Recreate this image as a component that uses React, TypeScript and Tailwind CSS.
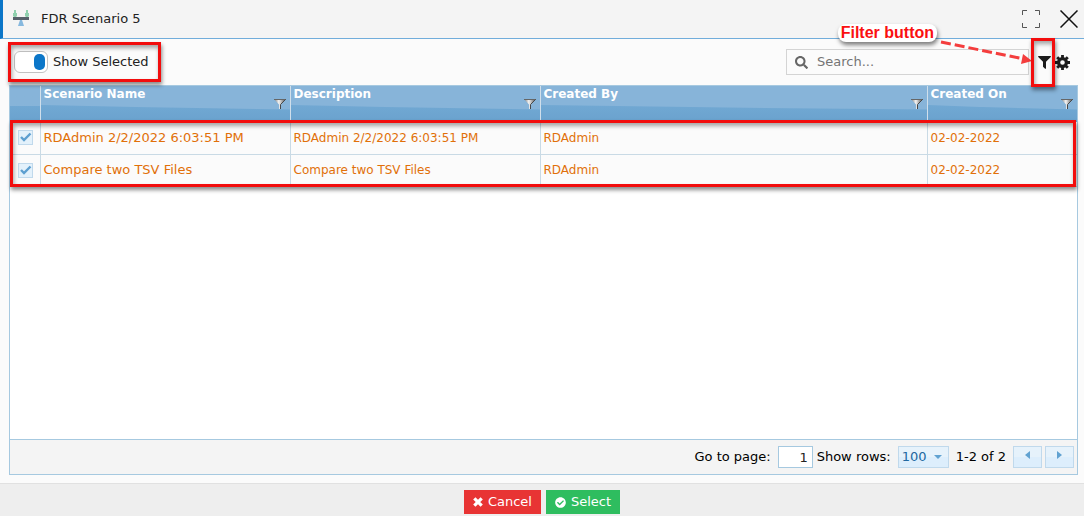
import { useState } from "react";
import { FaCheckCircle, FaSearch } from "react-icons/fa";

type Scenario = { name: string; description: string; createdBy: string; createdOn: string };

const scenarios: Scenario[] = [
  {
    name: "RDAdmin 2/2/2022 6:03:51 PM",
    description: "RDAdmin 2/2/2022 6:03:51 PM",
    createdBy: "RDAdmin",
    createdOn: "02-02-2022",
  },
  {
    name: "Compare two TSV Files",
    description: "Compare two TSV Files",
    createdBy: "RDAdmin",
    createdOn: "02-02-2022",
  },
];

const columns = ["Scenario Name", "Description", "Created By", "Created On"];

const highlight =
  "pointer-events-none absolute z-10 border-3 border-[#f20d0d] shadow-[1px_3px_4px_rgba(0,0,0,0.45),inset_1px_3px_4px_rgba(0,0,0,0.35)]";

function ScaleIcon() {
  return (
    <svg width="18" height="18" viewBox="0 0 18 18" aria-hidden="true">
      <path d="M2 0h2v3h1v3L3 8 1 6V3h1zM14 0h2v3h1v3l-2 2-2-2V3h1z" fill="#8fd0ae" />
      <path d="M1 7h16v3H1z" fill="#56616a" />
      <path d="M8 10h2l2 6H6z" fill="#86b8de" />
    </svg>
  );
}

function ExpandIcon() {
  return (
    <svg width="18" height="18" viewBox="0 0 18 18" fill="none" stroke="#555" aria-hidden="true">
      <path d="M.5 5V.5H5M13 .5h4.500V5M17.500 13v4.500H13M5 17.500H.5V13" />
    </svg>
  );
}

function CloseIcon() {
  return (
    <svg width="18" height="18" viewBox="0 0 18 18" stroke="#111" strokeWidth="1.500" aria-hidden="true">
      <path d="M.5.5l17 17M17.500.5l-17 17" />
    </svg>
  );
}

function FilterIcon() {
  return (
    <svg width="13" height="13" viewBox="0 0 13 13" fill="#1c1c1c" aria-hidden="true">
      <path d="M.6 0h11.800q.9.200.4 1L8 5.800v6.600q-.3.600-.9.300L5 10.700V5.800L.2 1Q-.2.200.6 0z" />
    </svg>
  );
}

function GearIcon() {
  return (
    <svg width="15" height="15" viewBox="0 0 15 15" fill="none" stroke="#1c1c1c" aria-hidden="true">
      <circle cx="7.500" cy="7.500" r="3.900" strokeWidth="3.200" />
      <path
        d="M7.500 0v3M7.500 12v3M0 7.500h3M12 7.500h3M2.200 2.200l2.100 2.100M10.700 10.700l2.100 2.100M2.200 12.800l2.100-2.100M10.700 4.300l2.100-2.100"
        strokeWidth="2.800"
      />
    </svg>
  );
}

function CrossIcon() {
  return (
    <svg width="10" height="10" viewBox="0 0 10 10" stroke="#fff" strokeWidth="3.200" aria-hidden="true">
      <path d="M1.300 1.300l7.400 7.400M8.700 1.300L1.300 8.700" />
    </svg>
  );
}

function FunnelIcon() {
  return (
    <svg width="12" height="12" viewBox="0 0 12 12" aria-hidden="true">
      <defs>
        <linearGradient id="funnel">
          <stop offset="0" stopColor="#777" />
          <stop offset=".4" stopColor="#f5f5f5" />
          <stop offset="1" stopColor="#444" />
        </linearGradient>
      </defs>
      <path d="M0 1h12L7 6.500V11H5V6.500z" fill="url(#funnel)" />
      <path d="M0 1.500h12" stroke="#666" />
      <path d="M11.500 1.500l-5 5V11" fill="none" stroke="#484848" />
    </svg>
  );
}

function HeaderShade() {
  return (
    <svg
      className="pointer-events-none absolute inset-0 size-full"
      viewBox="0 0 100 36"
      preserveAspectRatio="none"
      aria-hidden="true"
    >
      <path d="M0 0H100V23.500Q50 22 0 19z" fill="#87b4d9" />
    </svg>
  );
}

function RowCheckbox({ label }: { label: string }) {
  return (
    <span className="relative block size-[15px]">
      <input
        type="checkbox"
        defaultChecked
        aria-label={label}
        className="peer block size-[15px] appearance-none border border-[#c0d9ec] bg-[#e3f1fb]"
      />
      <svg
        className="pointer-events-none absolute inset-0 hidden peer-checked:block"
        width="15"
        height="15"
        viewBox="0 0 15 15"
        fill="none"
        stroke="#5d9fd0"
        strokeWidth="2.400"
        aria-hidden="true"
      >
        <path d="M3 7l3 3 6.500-6.500" />
      </svg>
    </span>
  );
}

function Arrow({ left }: { left?: boolean }) {
  return (
    <svg width="5" height="8" viewBox="0 0 5 8" fill="#61a2d1" aria-hidden="true">
      <path d={left ? "M5 0v8L0 4z" : "M0 0v8l5-4z"} />
    </svg>
  );
}

export default function App() {
  const [showSelected, setShowSelected] = useState(true);

  return (
    <div className="flex min-h-screen flex-col bg-[#fbfbfb] font-['DejaVu_Sans',sans-serif] text-[13px] leading-4 text-[#222]">
      <header className="flex h-[39px] items-center border-b border-l-3 border-b-[#71addb] border-l-[#0b76c8] bg-[#f4f4f4] pr-1.5 pl-[9px]">
        <ScaleIcon />
        <h1 className="ml-[11px] flex-1">FDR Scenario 5</h1>
        <button type="button" aria-label="Maximize" className="mr-5">
          <ExpandIcon />
        </button>
        <button type="button" aria-label="Close">
          <CloseIcon />
        </button>
      </header>

      <main className="flex flex-1 flex-col pr-1.5 pb-2 pl-[9px]">
        <div className="flex h-[46px] items-center justify-between">
          <div className="relative pl-[5px]">
            <label className="flex items-center gap-[5px]">
              <input
                type="checkbox"
                checked={showSelected}
                onChange={(e) => setShowSelected(e.target.checked)}
                className="flex h-[22px] w-[34px] appearance-none items-center rounded-md border border-[#c2c2c2] bg-white px-0.5 before:h-4 before:w-[11px] before:rounded-[5px] before:bg-[#999] checked:justify-end checked:before:bg-[#0b76c8]"
              />
              <span>Show Selected</span>
            </label>
            <div className={`${highlight} -inset-y-[9px] -right-3 -left-px`} />
          </div>

          <div className="relative flex items-center">
            <label className="flex h-[26px] w-[243px] items-center border border-[#d4d4d4] px-2">
              <FaSearch className="size-[13px] text-[#666]" aria-hidden="true" />
              <input
                type="search"
                aria-label="Search"
                placeholder="Search..."
                className="ml-[9px] min-w-0 flex-1 bg-transparent outline-none placeholder:text-[#757575]"
              />
            </label>
            <div className="relative ml-[9px]">
              <button type="button" aria-label="Filter" className="block">
                <FilterIcon />
              </button>
              <div className={`${highlight} -inset-y-[18px] -right-1 -left-[7px]`} />
            </div>
            <button type="button" aria-label="Settings" className="mr-2 ml-1">
              <GearIcon />
            </button>
            <svg
              className="pointer-events-none absolute right-[46px] bottom-[9px]"
              width="92"
              height="28"
              viewBox="0 0 92 28"
              aria-hidden="true"
            >
              <path d="M1 4l83 17" stroke="#f43d3d" strokeWidth="3" strokeDasharray="10 4" />
              <path d="M92 23l-11 3 2-10z" fill="#f43d3d" />
            </svg>
            <span className="pointer-events-none absolute right-[141px] bottom-[33px] rounded-lg bg-white px-[3px] font-['Liberation_Sans',sans-serif] text-base leading-[18px] font-bold whitespace-nowrap text-[#fa1010] shadow-[1px_3px_4px_rgba(0,0,0,0.5)]">
              Filter button
            </span>
          </div>
        </div>

        <section className="flex flex-1 flex-col border border-[#a6c9e0] bg-white">
          <div className="relative">
            <table className="w-full table-fixed border-collapse text-xs">
              <colgroup>
                <col className="w-[30px]" />
                <col className="w-[250px]" />
                <col className="w-[250px]" />
                <col />
                <col className="w-[150px]" />
              </colgroup>
              <thead>
                <tr className="h-9 bg-linear-to-b from-[#79afd8] to-[#6aa2ce] text-left align-top text-white">
                  <th className="border-r border-[#d0dfeb] bg-linear-to-b from-[#87b4d9] from-55% to-transparent to-55%" />
                  {columns.map((column) => (
                    <th key={column} scope="col" className="relative border-r border-[#d0dfeb] px-[3px] last:border-r-0">
                      <HeaderShade />
                      <span className="relative">{column}</span>
                      <button
                        type="button"
                        aria-label={`Filter ${column}`}
                        className="absolute right-1 bottom-3"
                      >
                        <FunnelIcon />
                      </button>
                    </th>
                  ))}
                </tr>
              </thead>
              <tbody>
                {scenarios.map((scenario) => (
                  <tr key={scenario.name} className="h-8 border-b border-[#c9dae5] bg-[#fbfbfb] text-[#e17009]">
                    <td className="border-r border-[#c9dae5] pl-2">
                      <RowCheckbox label={`Select ${scenario.name}`} />
                    </td>
                    <td className="border-r border-[#c9dae5] px-[3px] text-[13px] leading-4">{scenario.name}</td>
                    <td className="border-r border-[#c9dae5] px-[3px]">{scenario.description}</td>
                    <td className="border-r border-[#c9dae5] px-[3px]">{scenario.createdBy}</td>
                    <td className="px-[3px]">{scenario.createdOn}</td>
                  </tr>
                ))}
              </tbody>
            </table>
            <div className={`${highlight} top-[34px] right-px bottom-0 left-0`} />
          </div>

          <div className="mt-auto flex h-[35px] items-center justify-end border-t border-[#a6c9e0] bg-[#f4f4f4] pr-[3px] text-black">
            <label className="flex items-center gap-[7px]">
              Go to page:
              <input
                defaultValue="1"
                inputMode="numeric"
                className="h-[22px] w-[35px] border border-[#a6c9e0] bg-white pr-1 text-right text-[#222]"
              />
            </label>
            <label className="ml-1 flex items-center gap-[7px]">
              Show rows:
              <span className="relative">
                <select
                  defaultValue="100"
                  className="block h-[22px] w-[51px] appearance-none border border-[#c0d9ec] bg-linear-to-b from-[#e6f2fb] from-50% to-[#ddeefc] to-50% pl-[3px] text-[#2268a0]"
                >
                  <option>50</option>
                  <option>100</option>
                </select>
                <svg
                  className="pointer-events-none absolute top-[9px] right-[7px]"
                  width="8"
                  height="4"
                  viewBox="0 0 8 4"
                  fill="#61a2d1"
                  aria-hidden="true"
                >
                  <path d="M0 0h8L4 4z" />
                </svg>
              </span>
            </label>
            <span className="mx-[7px]">1-2 of 2</span>
            <button
              type="button"
              aria-label="Previous page"
              className="mr-[3px] flex h-[22px] w-[29px] items-center justify-center border border-[#c0d9ec] bg-linear-to-b from-[#e6f2fb] from-50% to-[#ddeefc] to-50% pb-1"
            >
              <Arrow left />
            </button>
            <button
              type="button"
              aria-label="Next page"
              className="flex h-[22px] w-[29px] items-center justify-center border border-[#c0d9ec] bg-linear-to-b from-[#e6f2fb] from-50% to-[#ddeefc] to-50% pb-1"
            >
              <Arrow />
            </button>
          </div>
        </section>
      </main>

      <footer className="flex h-[33px] items-center justify-center gap-[5px] border-t border-[#e1e1e1] bg-[#eee] pt-1 text-white">
        <button type="button" className="flex h-6 items-center gap-[5px] bg-[#e83434] px-[9px]">
          <CrossIcon />
          Cancel
        </button>
        <button type="button" className="flex h-6 items-center gap-[5px] bg-[#2ebd5f] px-[9px]">
          <FaCheckCircle className="size-[11px]" aria-hidden="true" />
          Select
        </button>
      </footer>
    </div>
  );
}
